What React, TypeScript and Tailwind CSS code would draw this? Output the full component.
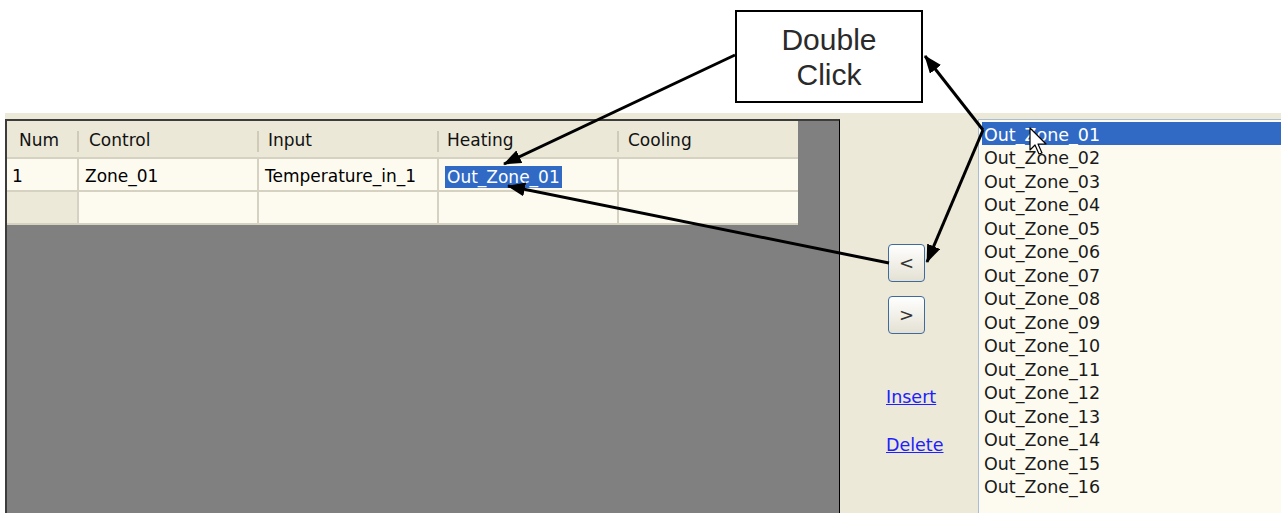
const zones = Array.from({ length: 16 }, (_, i) => `Out_Zone_${String(i + 1).padStart(2, "0")}`);

const cols = [
  { name: "Num", w: "w-[72px]", pad: "pl-[12px]" },
  { name: "Control", w: "w-[180px]", pad: "pl-[10px]" },
  { name: "Input", w: "w-[180px]", pad: "pl-[9px]" },
  { name: "Heating", w: "w-[180px]", pad: "pl-[8px]" },
  { name: "Cooling", w: "w-[179px]", pad: "pl-[9px]" },
];

function Arrows() {
  return (
    <svg className="absolute inset-0 pointer-events-none" width="1281" height="513">
      <defs>
        <marker id="head" markerUnits="userSpaceOnUse" markerWidth="18" markerHeight="14" refX="17" refY="7" orient="auto">
          <path d="M0,0 L18,7 L0,14 Z" fill="#000" />
        </marker>
      </defs>
      <g stroke="#000" strokeWidth="3" fill="none">
        <line x1="735" y1="55" x2="504" y2="164" markerEnd="url(#head)" />
        <line x1="983" y1="130" x2="925" y2="56" markerEnd="url(#head)" />
        <line x1="983" y1="130" x2="927" y2="262" markerEnd="url(#head)" />
        <line x1="889" y1="263" x2="508" y2="186" markerEnd="url(#head)" />
      </g>
      <path
        d="M1030,128 L1030,150 L1035,145 L1039,154 L1042,153 L1038,144 L1046,144 Z"
        fill="#fff"
        stroke="#000"
        strokeWidth="1.2"
        strokeLinejoin="round"
      />
    </svg>
  );
}

function XpButton({ label }: { label: string }) {
  return (
    <button className="w-[37px] h-[38px] rounded-[4px] border border-[#3d6b9e] bg-linear-to-b from-white to-[#e4e1d3] text-[18px] text-[#333] leading-none flex items-center justify-center">
      {label}
    </button>
  );
}

export default function App() {
  return (
    <div className="relative w-[1281px] h-[513px] overflow-hidden bg-white font-['DejaVu_Sans',sans-serif]">
      <div className="h-[113px] pt-[10px] pl-[735px]">
        <div className="w-[188px] h-[93px] border-2 border-black flex flex-col items-center justify-center font-['Liberation_Sans',Arial,sans-serif] text-[30px] leading-[35px] text-[#2a2a2a]">
          <span>Double</span>
          <span>Click</span>
        </div>
      </div>

      <div className="ml-[5px] h-[400px] bg-[#ece9d8] flex pt-[6px]">
        <div className="w-[835px] border-l-2 border-t-2 border-[#3c3c3c] border-r border-r-black bg-[#808080]">
          <div className="w-[791px] text-[17px] text-black">
            <div className="flex h-[38px] pt-[3px] bg-[#ebe8d8] border-b-2 border-[#d6d2c2]">
              {cols.map((c, i) => (
                <div key={c.name} className={`${c.w} ${c.pad} flex items-center relative text-[#111]`}>
                  {c.name}
                  {i < cols.length - 1 && <span className="absolute right-0 top-[7px] bottom-[5px] w-[2px] bg-[#cfcbb8]" />}
                </div>
              ))}
            </div>
            {[["1", "Zone_01", "Temperature_in_1", "Out_Zone_01", ""], ["", "", "", "", ""]].map((row, r) => (
              <div key={r} className="flex h-[33px] border-b-2 border-[#d6d2c2]">
                {row.map((v, i) => (
                  <div
                    key={i}
                    className={`${cols[i].w} ${i === 0 ? "pl-[5px]" : "pl-[6px]"} pt-[5px] ${i === 0 && r === 1 ? "bg-[#ece9d8]" : "bg-[#fdfbf0]"} ${i < row.length - 1 ? "border-r-2 border-[#d6d2c2]" : ""} flex items-center`}
                  >
                    {i === 3 && v ? (
                      <span className="bg-[#316ac5] text-white px-[2px] leading-[22px]">{v}</span>
                    ) : (
                      v
                    )}
                  </div>
                ))}
              </div>
            ))}
          </div>
        </div>

        <div className="w-[138px] pl-[48px] pt-[125px] flex flex-col">
          <XpButton label="<" />
          <div className="h-[14px]" />
          <XpButton label=">" />
          <a className="mt-[50px] -ml-[2px] text-[17.5px] text-[#2020ff] underline">Insert</a>
          <a className="mt-[22px] -ml-[2px] text-[17.5px] text-[#2020ff] underline">Delete</a>
        </div>

        <div className="flex-1 border-l border-t border-[#a9bdd4] bg-[#fdfbf0] pl-[3px] pt-[2px] text-[17.5px] text-[#1a1a1a]">
          {zones.map((z, i) => (
            <div key={z} className={`h-[23.47px] leading-[23.47px] pt-[2px] pl-[2px] ${i === 0 ? "bg-[#316ac5] text-white" : ""}`}>
              {z}
            </div>
          ))}
        </div>
      </div>

      <Arrows />
    </div>
  );
}
